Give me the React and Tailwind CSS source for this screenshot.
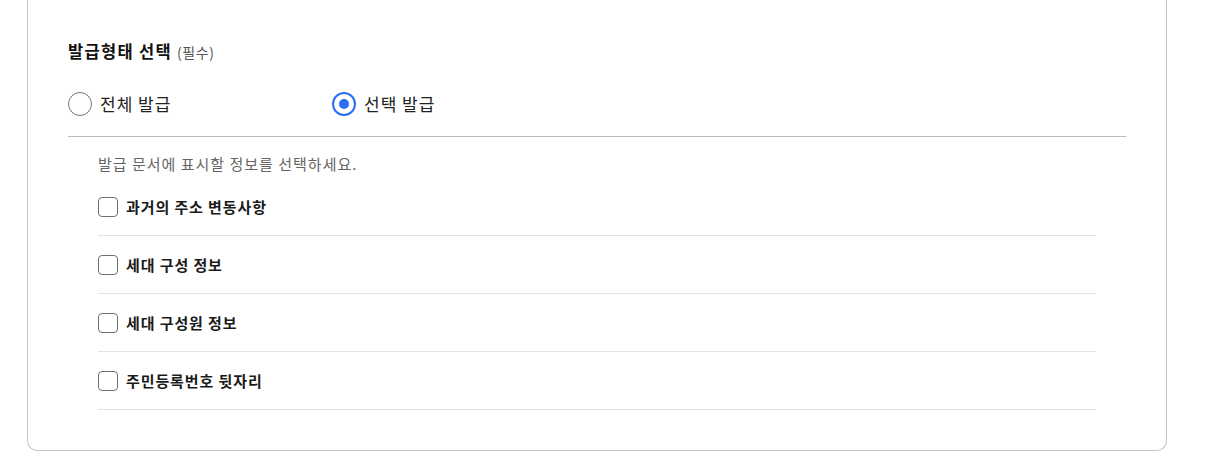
import React from "react";

const font = { fontFamily: '"Noto Sans CJK KR", "Noto Sans", sans-serif' };

function Radio({ checked, label }) {
  return (
    <label className="flex w-[264px] items-center gap-[8px]">
      {checked ? (
        <span className="flex h-[24px] w-[24px] items-center justify-center rounded-full border-[2px] border-[#2a6ff0] bg-white">
          <span className="h-[10px] w-[10px] rounded-full bg-[#2a6ff0]" />
        </span>
      ) : (
        <span className="h-[24px] w-[24px] rounded-full border border-[#767676] bg-white" />
      )}
      <span className="text-[17px] leading-[24px] tracking-[1px] text-[#222]">{label}</span>
    </label>
  );
}

function CheckRow({ label }) {
  return (
    <div className="flex items-center gap-[8px] border-b border-[#e2e2e8] pt-[18px] pb-[18px]">
      <span className="h-[20px] w-[20px] rounded-[4px] border border-[#6f6f6f] bg-white" />
      <span className="text-[15px] font-bold leading-[20px] tracking-[0.9px] text-[#1a1a1a]">{label}</span>
    </div>
  );
}

export default function App() {
  return (
    <div className="min-h-[471px] bg-white" style={font}>
      <div className="ml-[27px] w-[1140px] rounded-b-[10px] border-x border-b border-[#c4c4c4] bg-white px-[40px] pt-[39px] pb-[40px]">
        <div className="flex items-baseline gap-[5px] leading-[24px]">
          <span className="text-[16.5px] font-bold tracking-[1.3px] text-[#111]">발급형태 선택</span>
          <span className="text-[14px] tracking-[0.6px] text-[#555]">(필수)</span>
        </div>
        <div className="mt-[28px] flex border-b border-[#bdbdbd] pb-[20px]">
          <Radio label="전체 발급" />
          <Radio checked label="선택 발급" />
        </div>
        <div className="px-[30px]">
          <p className="mt-[16px] text-[15px] leading-[22px] tracking-[1px] text-[#666]">
            발급 문서에 표시할 정보를 선택하세요.
          </p>
          <div className="mt-[4px]">
            <CheckRow label="과거의 주소 변동사항" />
            <div className="pt-[1px]">
              <CheckRow label="세대 구성 정보" />
            </div>
            <div className="pt-[1px]">
              <CheckRow label="세대 구성원 정보" />
            </div>
            <div className="pt-[1px]">
              <CheckRow label="주민등록번호 뒷자리" />
            </div>
          </div>
        </div>
      </div>
    </div>
  );
}
